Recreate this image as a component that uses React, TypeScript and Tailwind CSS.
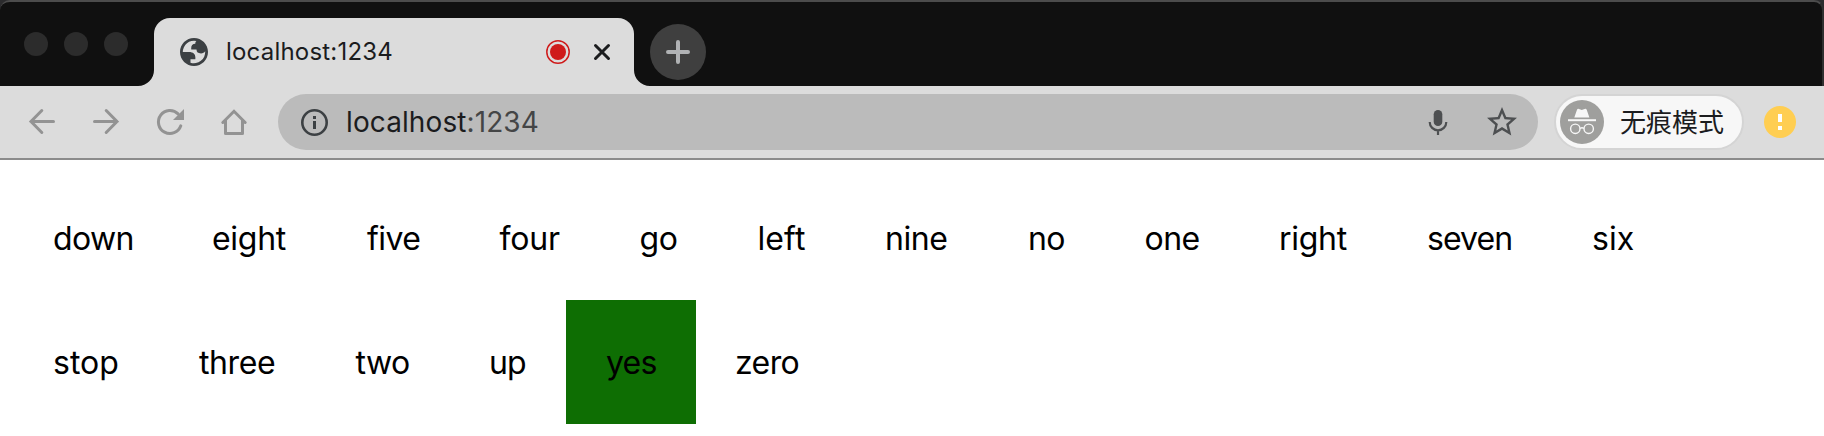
const rows = [
  [
    { t: "down", c: "w-[159px] tracking-[-0.6px]" },
    { t: "eight", c: "w-[155px] tracking-[-0.3px]" },
    { t: "five", c: "w-[132.5px] tracking-[-0.6px]" },
    { t: "four", c: "w-[140px] tracking-[-0.2px]" },
    { t: "go", c: "w-[118px] tracking-[-0.4px]" },
    { t: "left", c: "w-[127.5px] tracking-[0.1px]" },
    { t: "nine", c: "w-[143px] tracking-[-0.4px]" },
    { t: "no", c: "w-[116.5px] tracking-[-0.6px]" },
    { t: "one", c: "w-[134.5px] tracking-[-0.5px]" },
    { t: "right", c: "w-[148px] tracking-[-0.3px]" },
    { t: "seven", c: "w-[165px] tracking-[-0.9px]" },
    { t: "six", c: "w-[122px] tracking-normal" },
  ],
  [
    { t: "stop", c: "w-[146px] tracking-normal" },
    { t: "three", c: "w-[156.5px] tracking-[-0.4px]" },
    { t: "two", c: "w-[133.5px] tracking-[-0.5px]" },
    { t: "up", c: "w-[117px] tracking-[-0.8px]" },
    { t: "yes", c: "w-[130px] bg-[#0e6e03] tracking-[-0.8px]" },
    { t: "zero", c: "w-[145px] -indent-px tracking-[-0.6px]" },
  ],
];

const Dot = () => <span className="size-6 rounded-full bg-[#2c2c2c]" />;

function Globe() {
  return (
    <svg className="size-7" viewBox="2 2 20 20" fill="#3c4043" fillRule="evenodd">
      <path d="M12 2C6.48 2 2 6.48 2 12s4.48 10 10 10 10-4.48 10-10S17.52 2 12 2zM4 12h4.4c3.407.022 4.922 1.73 4.543 5.127H9.488v2.47a8.004 8.004 0 0 0 10.498-8.083C19.327 12.504 18.332 13 17 13c-2.137 0-3.206-.916-3.206-2.75h-3.748c-.274-2.728.683-4.092 2.87-4.092 0-.975.327-1.597.811-1.97A8.004 8.004 0 0 0 4 12z" />
    </svg>
  );
}

function Nav() {
  return (
    <div className="flex w-[278px] items-center gap-8 pl-6">
      <svg className="size-8" viewBox="0 0 32 32" fill="none" stroke="#939393" strokeWidth="3" strokeLinecap="round">
        <path d="M29.5 15.5H7M17.8 4.500L7 15.5L17.8 26.500" />
      </svg>
      <svg className="size-8" viewBox="0 0 32 32" fill="none" stroke="#939393" strokeWidth="3" strokeLinecap="round">
        <path d="M6.500 15.5H29M18.2 4.500L29 15.5L18.2 26.500" />
      </svg>
      <svg className="size-8" viewBox="0 0 32 32" fill="none" stroke="#939393" strokeWidth="3" strokeLinecap="round">
        <path d="M26.100 7.900A11.500 11.500 0 1 0 28.800 19.800" />
        <path d="M32 3v11H21z" fill="#939393" stroke="none" />
      </svg>
      <svg className="size-8" viewBox="0 0 32 32" fill="none" stroke="#939393" strokeWidth="3" strokeLinecap="round" strokeLinejoin="miter">
        <path d="M6.800 16.500L18 5.300L29.200 16.500" />
        <path d="M9.500 14.500V27.500H26.500V14.500" strokeLinejoin="round" />
      </svg>
    </div>
  );
}

function Incognito() {
  return (
    <svg className="size-11 shrink-0" viewBox="0 0 44 44" fill="none">
      <circle cx="22" cy="22" r="22" fill="#9f9f9d" />
      <path d="M14.300 17.500L17 9.800Q17.500 8.500 19 9L21.800 9.900L24.600 9Q26.200 8.500 26.700 9.800L29.400 17.500z" fill="#f7f7f7" />
      <path d="M8 20.200H36" stroke="#f7f7f7" strokeWidth="2" />
      <circle cx="15.300" cy="28.800" r="4.700" stroke="#f7f7f7" strokeWidth="1.400" />
      <circle cx="28.700" cy="28.800" r="4.700" stroke="#f7f7f7" strokeWidth="1.400" />
      <path d="M20 28.500q2-1.500 4 0" stroke="#f7f7f7" strokeWidth="1.400" />
    </svg>
  );
}

export default function App() {
  return (
    <div className="h-[436px] w-[1824px] overflow-hidden bg-white font-['Inter','Noto_Sans_CJK_SC',sans-serif] text-black">
      <header className="bg-[#2b2b2d]">
        <div className="flex h-[86px] overflow-hidden rounded-t-[10px] border-t-2 border-r-2 border-t-[#4c4c4c] border-r-[#2f2f2f] bg-[#101010]">
          <div className="flex w-[138px] gap-4 pt-[30px] pl-6">
            <Dot />
            <Dot />
            <Dot />
          </div>
          <svg className="h-4 w-4 self-end" viewBox="0 0 16 16">
            <path d="M16 0A16 16 0 0 1 0 16H16z" fill="#dcdcdc" />
          </svg>
          <div className="mt-4 flex w-[480px] items-center rounded-t-[16px] bg-[#dcdcdc] pl-[26px]">
            <Globe />
            <span className="ml-[18px] w-[320px] text-[24px] leading-7 tracking-[0.2px] text-[#1b1c1e]">localhost:1234</span>
            <svg className="size-6" viewBox="0 0 24 24">
              <circle cx="12" cy="12" r="11.200" fill="none" stroke="#cf1b1b" strokeWidth="1.500" />
              <circle cx="12" cy="12" r="8" fill="#cf1b1b" />
            </svg>
            <svg className="ml-6 size-4 overflow-visible" viewBox="0 0 16 16" stroke="#1b1c1e" strokeWidth="3" strokeLinecap="round">
              <path d="M1.500 1.500L14.500 14.500M14.500 1.500L1.500 14.500" />
            </svg>
          </div>
          <svg className="h-4 w-4 self-end" viewBox="0 0 16 16">
            <path d="M0 0A16 16 0 0 0 16 16H0z" fill="#dcdcdc" />
          </svg>
          <span className="mt-[22px] flex size-14 items-center justify-center rounded-full bg-[#3f3f3f]">
            <svg className="size-6" viewBox="0 0 24 24" stroke="#b0b2b4" strokeWidth="4" strokeLinecap="round">
              <path d="M12 2V22M2 12H22" />
            </svg>
          </span>
        </div>
      </header>
      <div className="flex h-[74px] items-center border-b-2 border-[#8b8b8b] bg-[#dcdcdc]">
        <Nav />
        <div className="flex h-14 w-[1260px] items-center rounded-full bg-[#bbbbbb] pl-[22px]">
          <svg className="size-7" viewBox="0 0 28 28" fill="none">
            <circle cx="14.500" cy="14.500" r="12.200" stroke="#3c4043" strokeWidth="2.600" />
            <path d="M13 8h3v3h-3zM13 13h3v8h-3z" fill="#3c4043" />
          </svg>
          <span className="ml-[18px] w-[1078px] text-[28px] leading-8 tracking-[0.1px] text-[#1b1c1e]">
            localhost<span className="text-[#444546]">:1234</span>
          </span>
          <svg className="size-7 shrink-0" viewBox="0 0 28 28" fill="none">
            <rect x="9.700" y="2" width="8.600" height="16" rx="4.300" fill="#4d4f51" />
            <path d="M5.700 14A8.300 8.300 0 0 0 22.300 14M14 22V27" stroke="#4d4f51" strokeWidth="2.200" />
          </svg>
          <svg className="ml-8 size-9 shrink-0" viewBox="0 0 24 24" fill="#4d4f51">
            <path d="M22 9.240l-7.190-.62L12 2 9.190 8.630 2 9.240l5.460 4.730L5.820 21 12 17.270 18.180 21l-1.630-7.030L22 9.240zM12 15.400l-3.760 2.270 1-4.280-3.320-2.880 4.380-.38L12 6.100l1.710 4.040 4.380.38-3.320 2.880 1 4.280L12 15.400z" />
          </svg>
        </div>
        <div className="ml-4 flex h-14 w-[190px] items-center rounded-full border-2 border-[#d4d4d4] bg-[#f7f7f7] pl-1">
          <Incognito />
          <span className="ml-[16px] pt-0.5 text-[26px] leading-8 text-[#1b1c1e]">无痕模式</span>
        </div>
        <svg className="ml-5 size-8" viewBox="0 0 32 32">
          <circle cx="16" cy="16" r="16" fill="#ffce52" />
          <path d="M14 8h4v8h-4zM14 20h4v4h-4z" fill="#fff" />
        </svg>
      </div>
      <main className="pt-4 pl-[13px] text-[32px] leading-[44px]">
        {rows.map((row, i) => (
          <ul key={i} className="flex">
            {row.map((w) => (
              <li key={w.t} className={`h-[124px] shrink-0 pt-[41px] pl-10 whitespace-nowrap ${w.c}`}>
                {w.t}
              </li>
            ))}
          </ul>
        ))}
      </main>
    </div>
  );
}
